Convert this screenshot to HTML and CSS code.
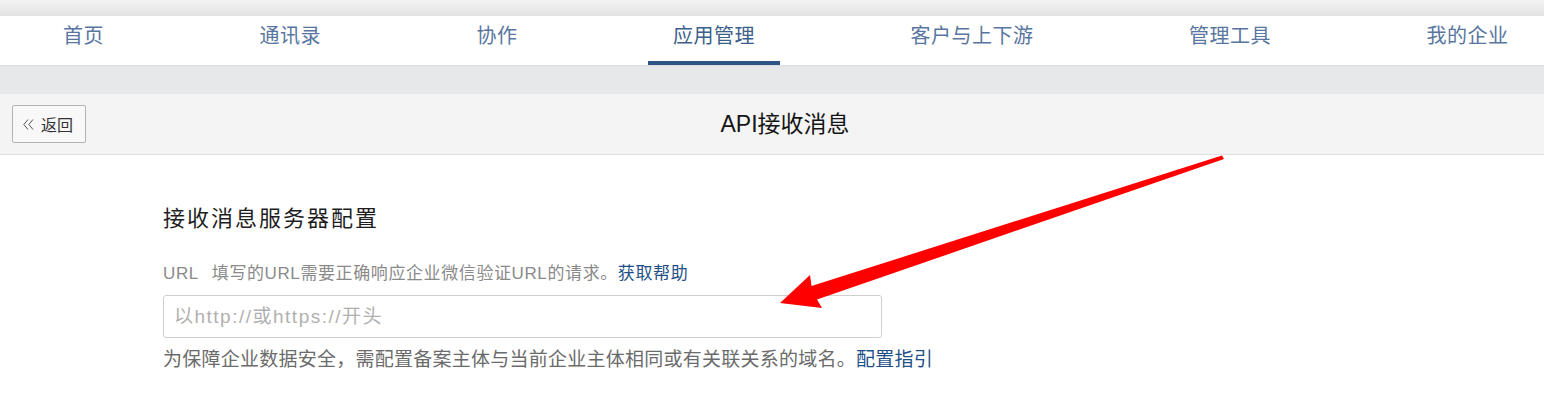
FILE: index.html
```html
<!DOCTYPE html>
<html lang="zh-CN">
<head>
<meta charset="utf-8">
<title>API接收消息</title>
<link rel="stylesheet" href="styles.css">
</head>
<body>
<div class="page">
  <div class="top-shade"></div>
  <nav class="nav">
    <a class="nav-item">首页</a>
    <a class="nav-item">通讯录</a>
    <a class="nav-item">协作</a>
    <a class="nav-item active">应用管理</a>
    <a class="nav-item">客户与上下游</a>
    <a class="nav-item">管理工具</a>
    <a class="nav-item">我的企业</a>
  </nav>
  <div class="band"></div>
  <div class="header">
    <button class="back-btn">
      <svg class="back-icon" width="11" height="11" viewBox="0 0 11 11"><path d="M5 0.5 L0.8 5.5 L5 10.5 M10 0.5 L5.8 5.5 L10 10.5" fill="none" stroke="#555" stroke-width="1"/></svg>
      <span>返回</span>
    </button>
    <div class="title">API接收消息</div>
  </div>
  <main class="content">
    <h2 class="section-title">接收消息服务器配置</h2>
    <div class="label"><span class="label-key">URL</span><span>填写的URL需要正确响应企业微信验证URL的请求。</span><a class="link">获取帮助</a></div>
    <input class="url-input" type="text" placeholder="以http://或https://开头">
    <div class="note">为保障企业数据安全，需配置备案主体与当前企业主体相同或有关联关系的域名。<a class="link">配置指引</a></div>
  </main>
  <svg class="arrow" width="1544" height="410" viewBox="0 0 1544 410">
    <polygon points="1222,155.5 1224,159 817,299.5 822,308 780,303 810,275 811.5,286" fill="#ff0000"/>
  </svg>
</div>
</body>
</html>
```

FILE: styles.css
```css
* { box-sizing: border-box; }
html, body { margin: 0; padding: 0; background: #fff; }
body {
  font-family: "Liberation Sans", "Noto Sans CJK SC", sans-serif;
  width: 1544px;
  height: 410px;
  overflow: hidden;
}
.page { position: relative; width: 1544px; height: 410px; }

.top-shade {
  height: 16px;
  background: linear-gradient(#f3f3f3, #e3e3e3);
}

.nav {
  display: flex;
  height: 49px;
  background: #fff;
  padding-left: 38px;
  gap: 105.5px;
}
.nav-item {
  display: block;
  height: 49px;
  padding: 8px 25px 0;
  font-size: 20px;
  letter-spacing: 0.5px;
  line-height: 24px;
  color: #5876a0;
  border-bottom: 4px solid transparent;
  white-space: nowrap;
}
.nav-item.active {
  color: #3d5f8c;
  border-bottom-color: #2e5585;
}

.band {
  height: 29px;
  background: #e7e8ea;
  box-shadow: inset 0 2px 2px -1px rgba(0,0,0,0.06);
}

.header {
  display: flex;
  align-items: center;
  height: 61px;
  padding: 0 12px 1px;
  background: #f4f4f4;
  border-bottom: 1px solid #dedede;
}
.back-btn {
  display: flex;
  align-items: center;
  width: 74px;
  height: 38px;
  padding: 0 0 0 10px;
  border: 1px solid #b3b3b3;
  border-radius: 2px;
  background: #f8f8f8;
  font-family: "Liberation Sans", "Noto Sans CJK SC", sans-serif;
  font-size: 16px;
  color: #333;
  gap: 7px;
}
.back-icon { display: block; margin-top: 1px; }
.title {
  flex: 1;
  text-align: center;
  font-size: 23px;
  color: #151515;
  padding-right: 48px;
  line-height: 28px;
}

.content {
  padding-left: 163px;
}
.section-title {
  margin: 49px 0 0;
  font-size: 22px;
  letter-spacing: 2px;
  font-weight: normal;
  line-height: 30px;
  color: #1e1e1e;
}
.label {
  margin-top: 28px;
  font-size: 17px;
  letter-spacing: 0.6px;
  line-height: 24px;
  color: #8a8a8a;
  white-space: nowrap;
}
.label-key { margin-right: 13px; }
.link { color: #1f4f87; }
.url-input {
  display: block;
  margin-top: 9px;
  width: 719px;
  height: 43px;
  border: 1px solid #cfcfcf;
  border-radius: 3px;
  padding: 0 10px;
  font-family: "Liberation Sans", "Noto Sans CJK SC", sans-serif;
  font-size: 19px;
  letter-spacing: 1.5px;
  color: #333;
  outline: none;
}
.url-input::placeholder { color: #b0b0b0; }
.note {
  margin-top: 10px;
  font-size: 19px;
  letter-spacing: 0.25px;
  line-height: 24px;
  color: #6b6b6b;
  white-space: nowrap;
}

.arrow {
  position: absolute;
  left: 0;
  top: 0;
  pointer-events: none;
}
```
